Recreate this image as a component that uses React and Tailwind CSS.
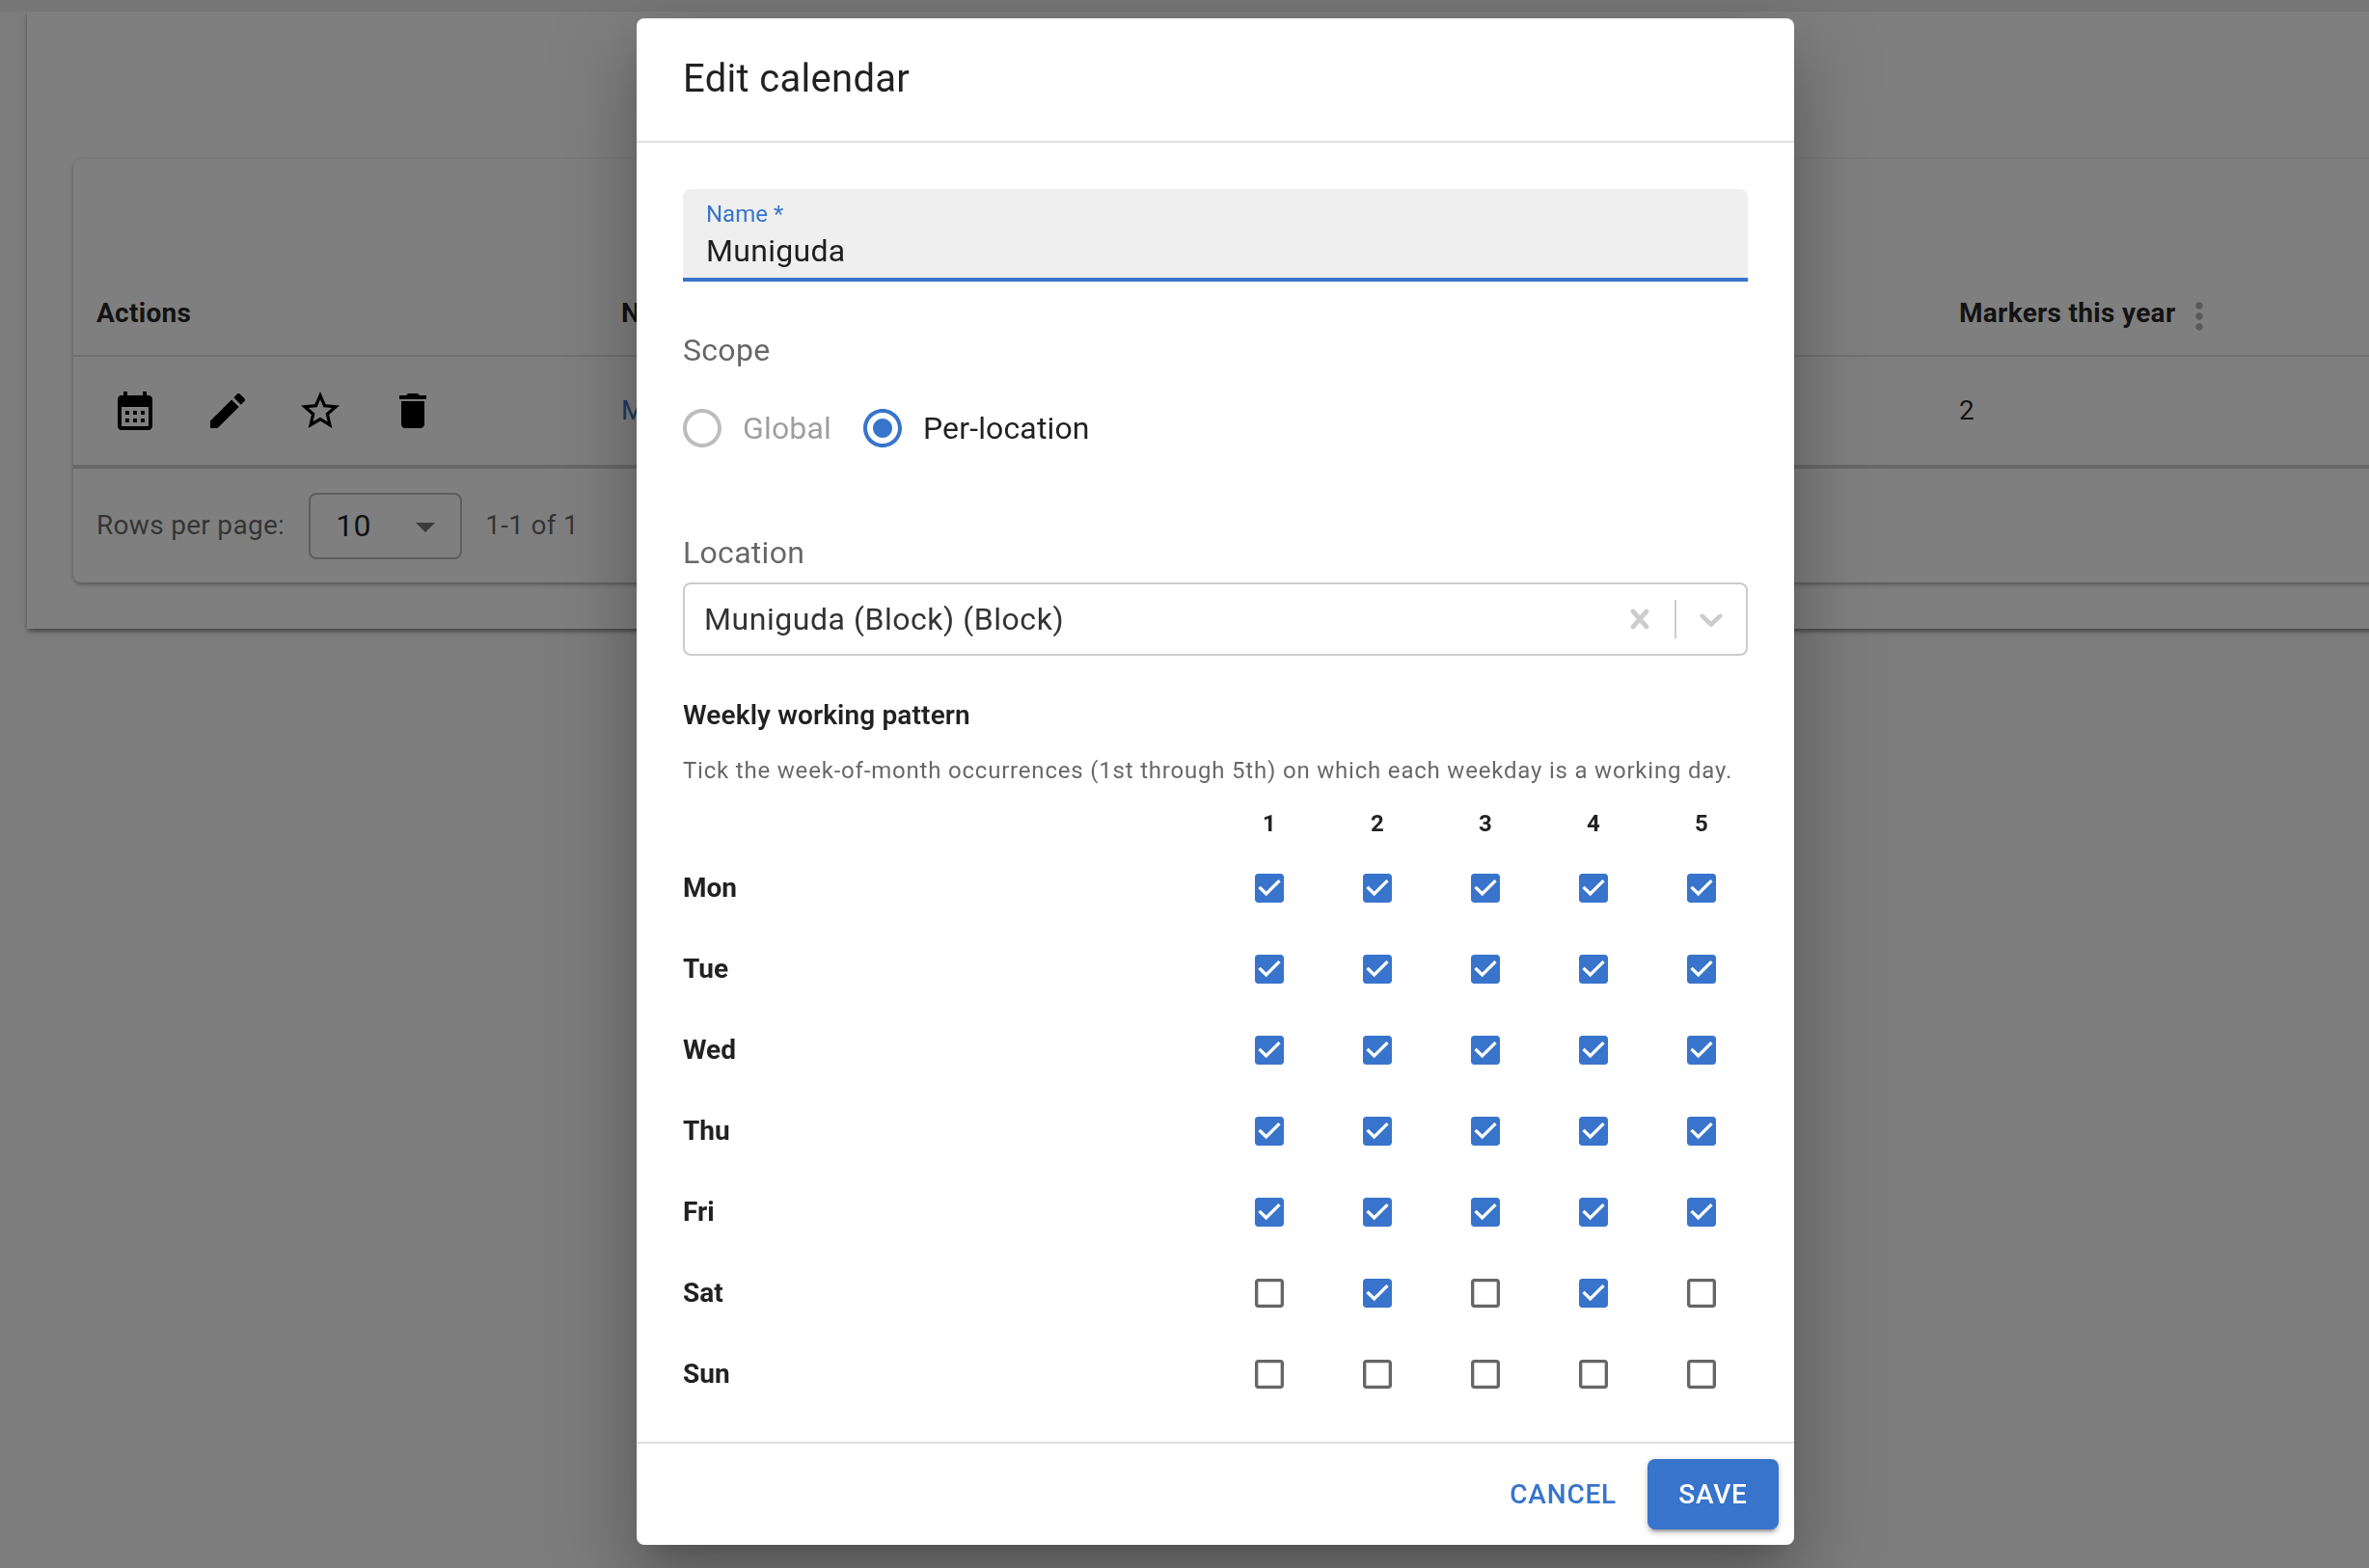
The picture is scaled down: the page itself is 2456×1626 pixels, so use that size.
import React from "react";

const BLUE = "#3874cb";

const days = [
  { name: "Mon", weeks: [1, 1, 1, 1, 1] },
  { name: "Tue", weeks: [1, 1, 1, 1, 1] },
  { name: "Wed", weeks: [1, 1, 1, 1, 1] },
  { name: "Thu", weeks: [1, 1, 1, 1, 1] },
  { name: "Fri", weeks: [1, 1, 1, 1, 1] },
  { name: "Sat", weeks: [0, 1, 0, 1, 0] },
  { name: "Sun", weeks: [0, 0, 0, 0, 0] },
];

function Icon({ d, size = 48, color = "#000" }) {
  return (
    <svg width={size} height={size} viewBox="0 0 24 24" fill={color} className="shrink-0">
      <path d={d} />
    </svg>
  );
}

const icons = {
  calendar:
    "M19 4h-1V2h-2v2H8V2H6v2H5c-1.11 0-1.99.9-1.99 2L3 20c0 1.1.89 2 2 2h14c1.1 0 2-.9 2-2V6c0-1.1-.9-2-2-2zm0 16H5V10h14v10zM9 14H7v-2h2v2zm4 0h-2v-2h2v2zm4 0h-2v-2h2v2zm-8 4H7v-2h2v2zm4 0h-2v-2h2v2zm4 0h-2v-2h2v2z",
  edit: "M3 17.25V21h3.75L17.81 9.94l-3.75-3.75L3 17.25zM20.71 7.04c.39-.39.39-1.02 0-1.41l-2.34-2.34c-.39-.39-1.02-.39-1.41 0l-1.83 1.83 3.75 3.75 1.83-1.83z",
  star: "M22 9.24l-7.19-.62L12 2 9.19 8.63 2 9.24l5.46 4.73L5.82 21 12 17.27 18.18 21l-1.63-7.03L22 9.24zM12 15.4l-3.76 2.27 1-4.28-3.32-2.88 4.38-.38L12 6.1l1.71 4.04 4.38.38-3.32 2.88 1 4.28L12 15.4z",
  trash: "M6 19c0 1.1.9 2 2 2h8c1.1 0 2-.9 2-2V7H6v12zM19 4h-3.5l-1-1h-5l-1 1H5v2h14V4z",
  more: "M12 8c1.1 0 2-.9 2-2s-.9-2-2-2-2 .9-2 2 .9 2 2 2zm0 2c-1.1 0-2 .9-2 2s.9 2 2 2 2-.9 2-2-.9-2-2-2zm0 6c-1.1 0-2 .9-2 2s.9 2 2 2 2-.9 2-2-.9-2-2-2z",
  checked:
    "M19 3H5c-1.11 0-2 .9-2 2v14c0 1.1.89 2 2 2h14c1.11 0 2-.9 2-2V5c0-1.1-.89-2-2-2zm-9 14l-5-5 1.41-1.41L10 14.17l7.59-7.59L19 8l-9 9z",
  blank:
    "M19 5v14H5V5h14m0-2H5c-1.1 0-2 .9-2 2v14c0 1.1.9 2 2 2h14c1.1 0 2-.9 2-2V5c0-1.1-.9-2-2-2z",
  ring: "M12 2C6.48 2 2 6.48 2 12s4.48 10 10 10 10-4.48 10-10S17.52 2 12 2zm0 18c-4.42 0-8-3.58-8-8s3.58-8 8-8 8 3.58 8 8-3.58 8-8 8z",
  ringDot:
    "M12 2C6.48 2 2 6.48 2 12s4.48 10 10 10 10-4.48 10-10S17.52 2 12 2zm0 18c-4.42 0-8-3.58-8-8s3.58-8 8-8 8 3.58 8 8-3.58 8-8 8zM12 7c-2.76 0-5 2.24-5 5s2.24 5 5 5 5-2.24 5-5-2.24-5-5-5z",
};

function Background() {
  return (
    <div className="w-[2500px] ml-[28px] pt-[153px] pb-[48px] pl-[48px] bg-white shadow-[0_4px_6px_-2px_rgba(0,0,0,0.4),0_2px_4px_0_rgba(0,0,0,0.2)]">
      <div className="rounded-lg bg-white shadow-[0_2px_4px_-1px_rgba(0,0,0,0.3),0_2px_6px_0_rgba(0,0,0,0.15)]">
        <div className="h-[114px]" />

        {/* table head */}
        <div className="grid grid-cols-[544px_1387px_1fr] h-[91px] pt-[3px] border-b-2 border-[#e0e0e0] items-center text-[28px] font-bold tracking-[0.01071em] text-[rgba(0,0,0,0.87)]">
          <div className="pl-6">Actions</div>
          <div className="pl-6">Name</div>
          <div className="pl-6 flex items-center">
            Markers this year
            <span className="ml-[3px] pt-[6px]">
              <Icon d={icons.more} size={44} color="rgba(0,0,0,0.3)" />
            </span>
          </div>
        </div>

        {/* row */}
        <div className="grid grid-cols-[544px_1387px_1fr] h-[116px] border-b-4 border-[#d0d0d0] items-center text-[28px] text-[rgba(0,0,0,0.87)]">
          <div className="pl-4 flex">
            {[icons.calendar, icons.edit, icons.star, icons.trash].map((d) => (
              <div key={d} className="w-[96px] flex justify-center">
                <Icon d={d} />
              </div>
            ))}
          </div>
          <div className="pl-6" style={{ color: BLUE }}>Muniguda</div>
          <div className="pl-6">2</div>
        </div>

        {/* pagination */}
        <div className="h-[118px] pl-6 flex items-center text-[28px] tracking-[0.01071em] text-[rgba(0,0,0,0.6)]">
          <span>Rows per page:</span>
          <div className="ml-[25px] w-[159px] h-[69px] border-2 border-[#bbb] rounded-lg flex items-center pl-[26px] text-[32px] text-[rgba(0,0,0,0.87)] relative">
            10
            <span className="absolute right-[12px] top-[9px]">
              <Icon d="M7 10l5 5 5-5z" color="rgba(0,0,0,0.54)" />
            </span>
          </div>
          <span className="ml-[24px]">1-1 of 1</span>
        </div>
      </div>
    </div>
  );
}

function Radio({ label, checked }) {
  return (
    <div className={checked ? "flex items-center ml-[33px]" : "flex items-center"}>
      <span className="-ml-1">
        <Icon d={checked ? icons.ringDot : icons.ring} color={checked ? BLUE : "rgba(0,0,0,0.26)"} />
      </span>
      <span className={checked ? "ml-[18px] text-[32px] text-[rgba(0,0,0,0.87)]" : "ml-[18px] text-[32px] text-[rgba(0,0,0,0.38)]"}>
        {label}
      </span>
    </div>
  );
}

function EditCalendarDialog() {
  return (
    <div className="absolute left-[660px] top-[19px] w-[1200px] h-[1583px] flex flex-col rounded-lg bg-white shadow-[0_22px_30px_-14px_rgba(0,0,0,0.2),0_48px_76px_6px_rgba(0,0,0,0.14),0_18px_92px_16px_rgba(0,0,0,0.12)]">
      <div className="h-[129px] shrink-0 border-b-2 border-[#e0e0e0] flex items-center pl-12 pb-[2px] text-[40px] tracking-[0.0075em] text-[rgba(0,0,0,0.87)]">
        Edit calendar
      </div>

      <div className="flex-1 px-12 pt-[48px]">
        {/* name */}
        <div className="h-[96px] rounded-t-lg bg-[#efefef] border-b-4 pl-[24px] pt-[8px]" style={{ borderColor: BLUE }}>
          <div className="text-[24px] leading-[36px]" style={{ color: BLUE }}>Name *</div>
          <div className="text-[32px] leading-[41px] tracking-[0.00938em] text-[rgba(0,0,0,0.87)]">Muniguda</div>
        </div>

        {/* scope */}
        <div className="mt-[51px] h-[40px] leading-[40px] text-[32px] tracking-[0.00938em] text-[rgba(0,0,0,0.6)]">Scope</div>
        <div className="mt-[37px] h-[48px] flex items-center tracking-[0.00938em]">
          <Radio label="Global" />
          <Radio label="Per-location" checked />
        </div>

        {/* location */}
        <div className="mt-[85px] h-[40px] leading-[40px] text-[32px] tracking-[0.00938em] text-[rgba(0,0,0,0.6)]">Location</div>
        <div className="mt-[11px] h-[76px] border-2 border-[#ccc] rounded-lg flex items-center">
          <div className="flex-1 pl-5 text-[32px] tracking-[0.017em] text-[#333]">Muniguda (Block) (Block)</div>
          <div className="w-[72px] flex justify-center">
            <svg width="40" height="40" viewBox="0 0 20 20" fill="#ccc">
              <path d="M14.348 14.849c-0.469 0.469-1.229 0.469-1.697 0l-2.651-3.030-2.651 3.029c-0.469 0.469-1.229 0.469-1.697 0-0.469-0.469-0.469-1.229 0-1.697l2.758-3.15-2.759-3.152c-0.469-0.469-0.469-1.228 0-1.697s1.228-0.469 1.697 0l2.652 3.031 2.651-3.031c0.469-0.469 1.228-0.469 1.697 0s0.469 1.229 0 1.697l-2.758 3.152 2.758 3.15c0.469 0.469 0.469 1.229 0 1.698z" />
            </svg>
          </div>
          <div className="w-[2px] h-[40px] bg-[#ccc]" />
          <div className="w-[72px] flex justify-center">
            <svg width="40" height="40" viewBox="0 0 20 20" fill="#ccc">
              <path d="M4.516 7.548c0.436-0.446 1.043-0.481 1.576 0l3.908 3.747 3.908-3.747c0.533-0.481 1.141-0.446 1.576 0 0.436 0.445 0.408 1.197 0 1.615-0.406 0.418-4.695 4.502-4.695 4.502-0.217 0.223-0.502 0.335-0.789 0.335s-0.572-0.112-0.791-0.335c0 0-4.287-4.084-4.695-4.502s-0.436-1.17 0-1.615z" />
            </svg>
          </div>
        </div>

        {/* weekly pattern */}
        <div className="mt-[42px] h-[40px] leading-[40px] text-[28px] font-semibold tracking-[0.005em] text-[rgba(0,0,0,0.87)]">Weekly working pattern</div>
        <div className="mt-[21px] h-[32px] leading-[32px] text-[24px] tracking-[0.03333em] text-[rgba(0,0,0,0.6)] whitespace-nowrap">
          Tick the week-of-month occurrences (1st through 5th) on which each weekday is a working day.
        </div>

        <div className="mt-[23px] grid grid-cols-[552px_repeat(5,112px)] h-[32px] leading-[32px] text-[24px] font-bold text-[rgba(0,0,0,0.87)]">
          <div />
          {[1, 2, 3, 4, 5].map((n) => (
            <div key={n} className="text-center">{n}</div>
          ))}
        </div>
        <div className="mt-[9px]">
          {days.map((day) => (
            <div key={day.name} className="grid grid-cols-[552px_repeat(5,112px)] h-[84px] items-center">
              <div className="text-[28px] font-bold text-[rgba(0,0,0,0.87)]">{day.name}</div>
              {day.weeks.map((on, i) => (
                <div key={i} className="flex justify-center">
                  <Icon d={on ? icons.checked : icons.blank} size={40} color={on ? BLUE : "rgba(0,0,0,0.6)"} />
                </div>
              ))}
            </div>
          ))}
        </div>
      </div>

      <div className="h-[107px] shrink-0 border-t-2 border-[#e0e0e0] flex justify-end gap-4 pt-[16px] pr-4">
        <button className="h-[73px] px-4 text-[28px] font-medium uppercase tracking-[0.02857em]" style={{ color: BLUE }}>
          Cancel
        </button>
        <button
          className="h-[73px] w-[136px] rounded-lg text-[28px] font-medium uppercase tracking-[0.02857em] text-white shadow-[0_6px_2px_-4px_rgba(0,0,0,0.2),0_4px_4px_0_rgba(0,0,0,0.14),0_2px_10px_0_rgba(0,0,0,0.12)]"
          style={{ backgroundColor: BLUE }}
        >
          Save
        </button>
      </div>
    </div>
  );
}

export default function App() {
  return (
    <div className="relative w-full h-[1626px] overflow-hidden bg-[#f9f9f9] font-['Roboto',sans-serif]">
      <div className="h-[12px] bg-[#eeeeee]" />
      <Background />
      <div className="fixed inset-0 bg-black/50" />
      <EditCalendarDialog />
    </div>
  );
}
